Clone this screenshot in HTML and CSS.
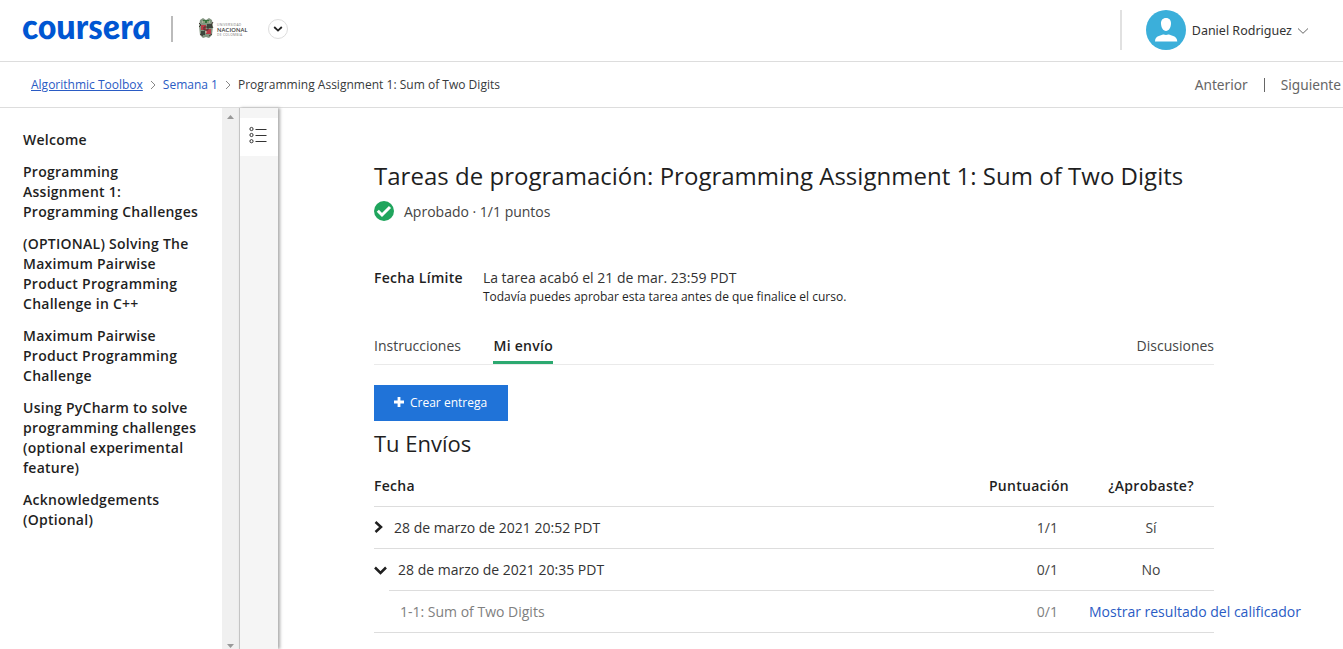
FILE: index.html
```html
<!DOCTYPE html>
<html lang="es">
<head>
<meta charset="utf-8">
<title>Coursera</title>
<link rel="stylesheet" href="styles.css">
</head>
<body>
<header class="topbar">
  <svg class="logo" width="132" height="30" viewBox="0 0 132 30" role="img" aria-label="coursera"><text x="0" y="0" transform="translate(1.500 24.500) skewX(8)" textLength="129" lengthAdjust="spacingAndGlyphs">coursera</text></svg>
  <span class="brand-rule"></span>
  <svg class="crest" width="16" height="22" viewBox="0 0 16 22">
    <path d="M2 3 5 1l3 2 3-2 3 2 1 6-1 9-3 3-3-1-3 1-3-3-1-9z" fill="#829580"/>
    <path d="M3 8h5v5H3zM8 12h5v5H8z" fill="#b93b46"/>
    <path d="M9 7h5v4H9zM3 14h4v4H3z" fill="#3c473d"/>
    <path d="M5 3h6v3H5z" fill="#35733d"/>
    <path d="M1 6l2 2-2 2M15 5l-2 3 2 3M2 17l3 2M14 17l-3 2M6 10h4v3H6z" fill="none" stroke="#443834"/>
    <path d="M4 5h3M9 5h3M7 15h2" stroke="#d8c9b5"/>
  </svg>
  <div class="univ"><span class="tiny">UNIVERSIDAD</span><span class="nac">NACIONAL</span><span class="tiny">DE COLOMBIA</span></div>
  <button class="round" aria-label="Abrir"><svg width="10" height="8" viewBox="0 0 10 8"><path d="M1.200 2 5 5.600 8.800 2" fill="none" stroke="#222" stroke-width="1.800"/></svg></button>
  <div class="user">
    <svg width="40" height="40" viewBox="0 0 40 40"><circle cx="20" cy="20" r="20" fill="#3bafda"/><path d="M20 8c3.400 0 5.200 2.400 5 5.800-.2 3.700-2.100 7.200-5 7.200s-4.800-3.500-5-7.200C14.800 10.400 16.600 8 20 8zM9 31.500c0-3.500 1.500-5 4.500-5.800 2.200-.6 3.500-1.200 4.300-1.200.9.500 3.500.5 4.400 0 .8 0 2.100.6 4.300 1.200 3 .8 4.500 2.300 4.800 5.800z" fill="#fff"/></svg>
    <span class="name">Daniel Rodriguez</span>
    <svg class="caret" width="12" height="8" viewBox="0 0 12 8"><path d="M1 1.500 6 6.300 11 1.500" fill="none" stroke="#666"/></svg>
  </div>
</header>
<nav class="crumbs">
  <a class="under" href="#">Algorithmic Toolbox</a>
  <svg width="6" height="10" viewBox="0 0 6 10"><path d="M1 1l4 4-4 4" fill="none" stroke="#888"/></svg>
  <a class="week" href="#">Semana 1</a>
  <svg width="6" height="10" viewBox="0 0 6 10"><path d="M1 1l4 4-4 4" fill="none" stroke="#888"/></svg>
  <span class="here">Programming Assignment 1: Sum of Two Digits</span>
  <div class="pager"><span>Anterior</span><i></i><span>Siguiente</span></div>
</nav>
<div class="body">
  <aside class="side">
    <p>Welcome</p>
    <p>Programming<br>Assignment 1:<br>Programming Challenges</p>
    <p>(OPTIONAL) Solving The<br>Maximum Pairwise<br>Product Programming<br>Challenge in C++</p>
    <p>Maximum Pairwise<br>Product Programming<br>Challenge</p>
    <p>Using PyCharm to solve<br>programming challenges<br>(optional experimental<br>feature)</p>
    <p>Acknowledgements<br>(Optional)</p>
  </aside>
  <div class="scroll">
    <svg width="7" height="4" viewBox="0 0 7 4"><path d="M0 4 3.500 0 7 4z" fill="#999"/></svg>
    <svg width="7" height="4" viewBox="0 0 7 4"><path d="M0 0h7L3.500 4z" fill="#999"/></svg>
  </div>
  <div class="rail"><div class="toggle"><svg width="18" height="18" viewBox="0 0 18 18" fill="none" stroke="#333"><circle cx="2.500" cy="3" r="1.600"/><circle cx="2.500" cy="9" r="1.600"/><circle cx="2.500" cy="15.200" r="1.600"/><path d="M6.500 3.500h11M6.500 9.500h11M6.500 15.500h11"/></svg></div></div>
  <main class="main">
    <h1>Tareas de programación: Programming Assignment 1: Sum of Two Digits</h1>
    <div class="status"><svg width="20" height="20" viewBox="0 0 20 20"><circle cx="10" cy="10" r="10" fill="#20a55d"/><path d="M3.800 9.800l4.200 4.200 8-8" fill="none" stroke="#fff" stroke-width="3"/></svg><span>Aprobado · 1/1 puntos</span></div>
    <div class="deadline"><b>Fecha Límite</b><div><p class="ended">La tarea acabó el 21 de mar. 23:59 PDT</p><p class="note">Todavía puedes aprobar esta tarea antes de que finalice el curso.</p></div></div>
    <div class="tabs"><span class="tab">Instrucciones</span><span class="tab on">Mi envío</span><span class="tab last">Discusiones</span></div>
    <button class="create"><svg width="10" height="10" viewBox="0 0 10 10"><path d="M5 0v10M0 5h10" stroke="#fff" stroke-width="2.800"/></svg><span>Crear entrega</span></button>
    <h2>Tu Envíos</h2>
    <div class="table">
      <div class="row head"><span>Fecha</span><span>Puntuación</span><span>¿Aprobaste?</span></div>
      <div class="row"><span class="when"><svg width="9" height="12" viewBox="0 0 9 12"><path d="M1.500 1 7 6l-5.500 5" fill="none" stroke="#1f1f1f" stroke-width="2.500"/></svg><span>28 de marzo de 2021 20:52 PDT</span></span><span>1/1</span><span>Sí</span></div>
      <div class="row open"><span class="when"><svg width="13" height="9" viewBox="0 0 13 9"><path d="M1 1.500 6.500 7 12 1.500" fill="none" stroke="#1f1f1f" stroke-width="2.500"/></svg><span>28 de marzo de 2021 20:35 PDT</span></span><span>0/1</span><span>No</span></div>
      <div class="row sub"><span>1-1: Sum of Two Digits</span><span>0/1</span><a href="#">Mostrar resultado del calificador</a></div>
    </div>
  </main>
</div>
</body>
</html>
```
FILE: styles.css
```css
* { box-sizing: border-box; }
body { margin: 0; width: 1343px; height: 649px; overflow: hidden; background: #fff; color: #1f1f1f; font: 14px/20px "Open Sans", "Noto Sans", sans-serif; }
p, h1, h2 { margin: 0; }
a { color: #2a5bc4; text-decoration: none; }
svg { flex: none; display: block; }
button { border: 0; padding: 0; font: inherit; display: flex; align-items: center; }
.topbar { height: 62px; border-bottom: 1px solid #ddd; display: flex; align-items: center; padding: 0 34px 0 22px; }
.logo { margin-top: -4px; overflow: visible; }
.logo text { font: italic 900 35px Lato, sans-serif; fill: #0056d2; }
.brand-rule { width: 2px; height: 26px; background: #bbb; margin: -3px 25px 0 17px; }
.crest { margin-top: -5px; }
.univ { display: flex; flex-direction: column; margin: -2px 0 0 3px; width: 52px; color: #333; }
.tiny { font: 3.3px/4px "Open Sans", sans-serif; letter-spacing: .3px; color: #777; }
.nac { font: 600 5.7px/6px Lato, sans-serif; letter-spacing: .15px; }
.round { width: 20px; height: 20px; margin: -4px 0 0 -1px; border: 1px solid #ddd; border-radius: 50%; background: #fff; justify-content: center; }
.user { margin-left: auto; height: 40px; margin-top: -1px; padding-left: 24px; border-left: 2px solid #e1e1e1; display: flex; align-items: center; }
.name { margin-left: 6px; padding-top: 2px; font: 12.5px/20px "Noto Sans", sans-serif; white-space: nowrap; color: #333; }
.caret { margin: 2px 0 0 5px; }
.crumbs { height: 46px; border-bottom: 1px solid #ddd; display: flex; align-items: center; padding-left: 31px; font-size: 12px; white-space: nowrap; }
.crumbs > svg { margin: 0 7px; }
.under { text-decoration: underline; }
.here { color: #373a3c; letter-spacing: .015px; }
.pager { margin-left: auto; display: flex; align-items: center; padding-right: 2px; color: #666; font: 13.7px/20px "Noto Sans", sans-serif; }
.pager i { width: 1px; height: 14px; background: #666; margin: 0 16px; }
.body { display: flex; height: 541px; }
.side { width: 222px; padding: 22px 0 0 23px; font-weight: 600; letter-spacing: .26px; white-space: nowrap; }
.side p { margin-bottom: 12px; }
.scroll { width: 17px; background: #f0f0f0; display: flex; flex-direction: column; justify-content: space-between; align-items: center; padding: 7px 0 1px; }
.rail { width: 39px; flex: none; background: #f5f5f5; border-left: 1px solid #c4c4c4; box-shadow: 2px 0 3px #aaa; padding-top: 10px; }
.toggle { height: 38px; background: #fff; padding: 8px 0 0 8.5px; }
.main { width: 840px; margin-left: 96px; padding-top: 52px; white-space: nowrap; }
h1 { font: 400 24px/32px "Open Sans", sans-serif; letter-spacing: .02px; }
.status { display: flex; align-items: center; gap: 10px; margin-top: 9px; height: 20px; color: #444; }
.status span { padding-top: 2px; }
.deadline { display: flex; gap: 20px; margin-top: 47px; height: 68px; }
.deadline b, .head, .on { font-weight: 600; letter-spacing: .28px; }
.ended { color: #333; }
.note { font-size: 12px; line-height: 18px; }
.tabs { height: 29px; border-bottom: 1px solid #eaeaea; display: flex; color: #444; }
.tab { height: 28px; }
.on { margin-left: 32px; padding-left: .5px; border-bottom: 3px solid #2ca970; color: #1f1f1f; }
.last { margin-left: auto; }
.create { width: 134px; height: 36px; margin-top: 20px; background: #2073d8; color: #fff; font-size: 12px; padding-left: 20px; gap: 6px; }
.create svg { margin-top: -2px; }
h2 { font: 400 22px/30px "Open Sans", sans-serif; margin-top: 7px; }
.table { margin-top: 7px; }
.row { height: 42px; border-bottom: 1px solid #ddd; display: grid; grid-template-columns: 600px 95px 145px; align-items: center; color: #444; }
.row > :nth-child(2) { text-align: right; padding-right: 11px; }
.row > :nth-child(3) { padding-left: 19px; text-align: center; }
.row.head { color: #1f1f1f; }
.head > :nth-child(2) { padding-right: 0; }
.when { display: flex; align-items: center; gap: 11px; color: #333; }
.open { margin-left: 15px; grid-template-columns: 585px 95px 145px; }
.open .when { margin-left: -15px; }
.when svg { margin-top: -2px; }
.open .when svg { margin-top: 1px; }
.sub { color: #808080; }
.sub > :first-child { padding-left: 26px; }
.row.sub > a { text-align: left; padding-left: 20px; }
```
